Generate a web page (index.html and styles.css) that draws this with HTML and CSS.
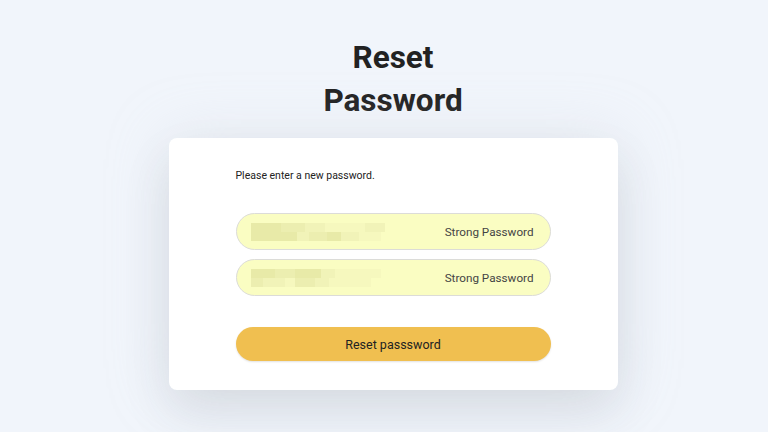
FILE: index.html
```html
<!DOCTYPE html>
<html lang="en">
<head>
<meta charset="utf-8">
<title>Reset Password</title>
<link rel="stylesheet" href="styles.css">
</head>
<body>
<main class="page">
  <h1 class="title">Reset<br>Password</h1>
  <section class="card">
    <p class="intro">Please enter a new password.</p>
    <div class="fields">
      <div class="field">
        <span class="blur">
          <span class="row"><i class="b w30 l1"></i><i class="b w24 l2"></i><i class="b w20 l3"></i><i class="b w40 l4"></i><i class="b w20 l3"></i></span>
          <span class="row"><i class="b w46 l1"></i><i class="b w12 l3"></i><i class="b w18 l2"></i><i class="b w14 l1"></i><i class="b w18 l3"></i><i class="b w22 l4"></i></span>
        </span>
        <span class="hint">Strong Password</span>
      </div>
      <div class="field">
        <span class="blur">
          <span class="row"><i class="b w24 l1"></i><i class="b w20 l2"></i><i class="b w26 l1"></i><i class="b w14 l3"></i><i class="b w30 l4"></i><i class="b w16 l4"></i></span>
          <span class="row"><i class="b w12 l2"></i><i class="b w22 l3"></i><i class="b w10 l4"></i><i class="b w20 l2"></i><i class="b w14 l3"></i><i class="b w24 l4"></i><i class="b w18 l4"></i></span>
        </span>
        <span class="hint">Strong Password</span>
      </div>
    </div>
    <button class="submit" type="button">Reset passsword</button>
  </section>
</main>
</body>
</html>
```
FILE: styles.css
```css
html, body {
  margin: 0;
  padding: 0;
}
body {
  background: #f1f5fb;
  font-family: Roboto, "Liberation Sans", Arial, sans-serif;
  color: #222;
  width: 768px;
  height: 432px;
  overflow: hidden;
}
.page {
  display: flex;
  flex-direction: column;
  align-items: center;
  padding-left: 18px;
  padding-top: 36px;
}
.title {
  margin: 0;
  font-size: 31.5px;
  font-weight: 700;
  line-height: 43px;
  text-align: center;
  color: #222;
}
.card {
  margin-top: 16px;
  width: 449px;
  height: 252px;
  box-sizing: border-box;
  background: #fff;
  border-radius: 8px;
  box-shadow: 0 24px 50px rgba(50, 55, 65, 0.10), 0 0 60px rgba(205, 212, 222, 0.35);
  padding: 31px 67px 0;
  display: flex;
  flex-direction: column;
}
.intro {
  margin: 0;
  font-size: 10.5px;
  line-height: 13px;
  color: #222;
}
.fields {
  margin-top: 31px;
  display: flex;
  flex-direction: column;
  gap: 9px;
}
.field {
  height: 37px;
  box-sizing: border-box;
  border: 1px solid #dcdcd8;
  border-radius: 19px;
  background: #fafdc2;
  display: flex;
  align-items: center;
  justify-content: space-between;
  padding: 0 16px 0 14px;
}
.blur {
  display: flex;
  flex-direction: column;
  gap: 0;
  filter: blur(0.6px);
}
.row {
  display: flex;
  height: 9px;
}
.b {
  display: block;
  height: 9px;
}
.w10 { width: 10px; }
.w12 { width: 12px; }
.w14 { width: 14px; }
.w16 { width: 16px; }
.w18 { width: 18px; }
.w20 { width: 20px; }
.w22 { width: 22px; }
.w24 { width: 24px; }
.w26 { width: 26px; }
.w30 { width: 30px; }
.w40 { width: 40px; }
.w46 { width: 46px; }
.l1 { background: #e8eaa8; }
.l2 { background: #eceeb0; }
.l3 { background: #f1f3b8; }
.l4 { background: #f6f8be; }
.hint {
  font-size: 11.7px;
  color: #444;
}
.submit {
  margin-top: 31px;
  height: 34px;
  border: none;
  border-radius: 17px;
  background: #f0bf50;
  box-shadow: 0 1px 2px rgba(0, 0, 0, 0.12);
  font-family: Roboto, "Liberation Sans", Arial, sans-serif;
  font-size: 12.5px;
  color: #222;
  cursor: pointer;
}
```
